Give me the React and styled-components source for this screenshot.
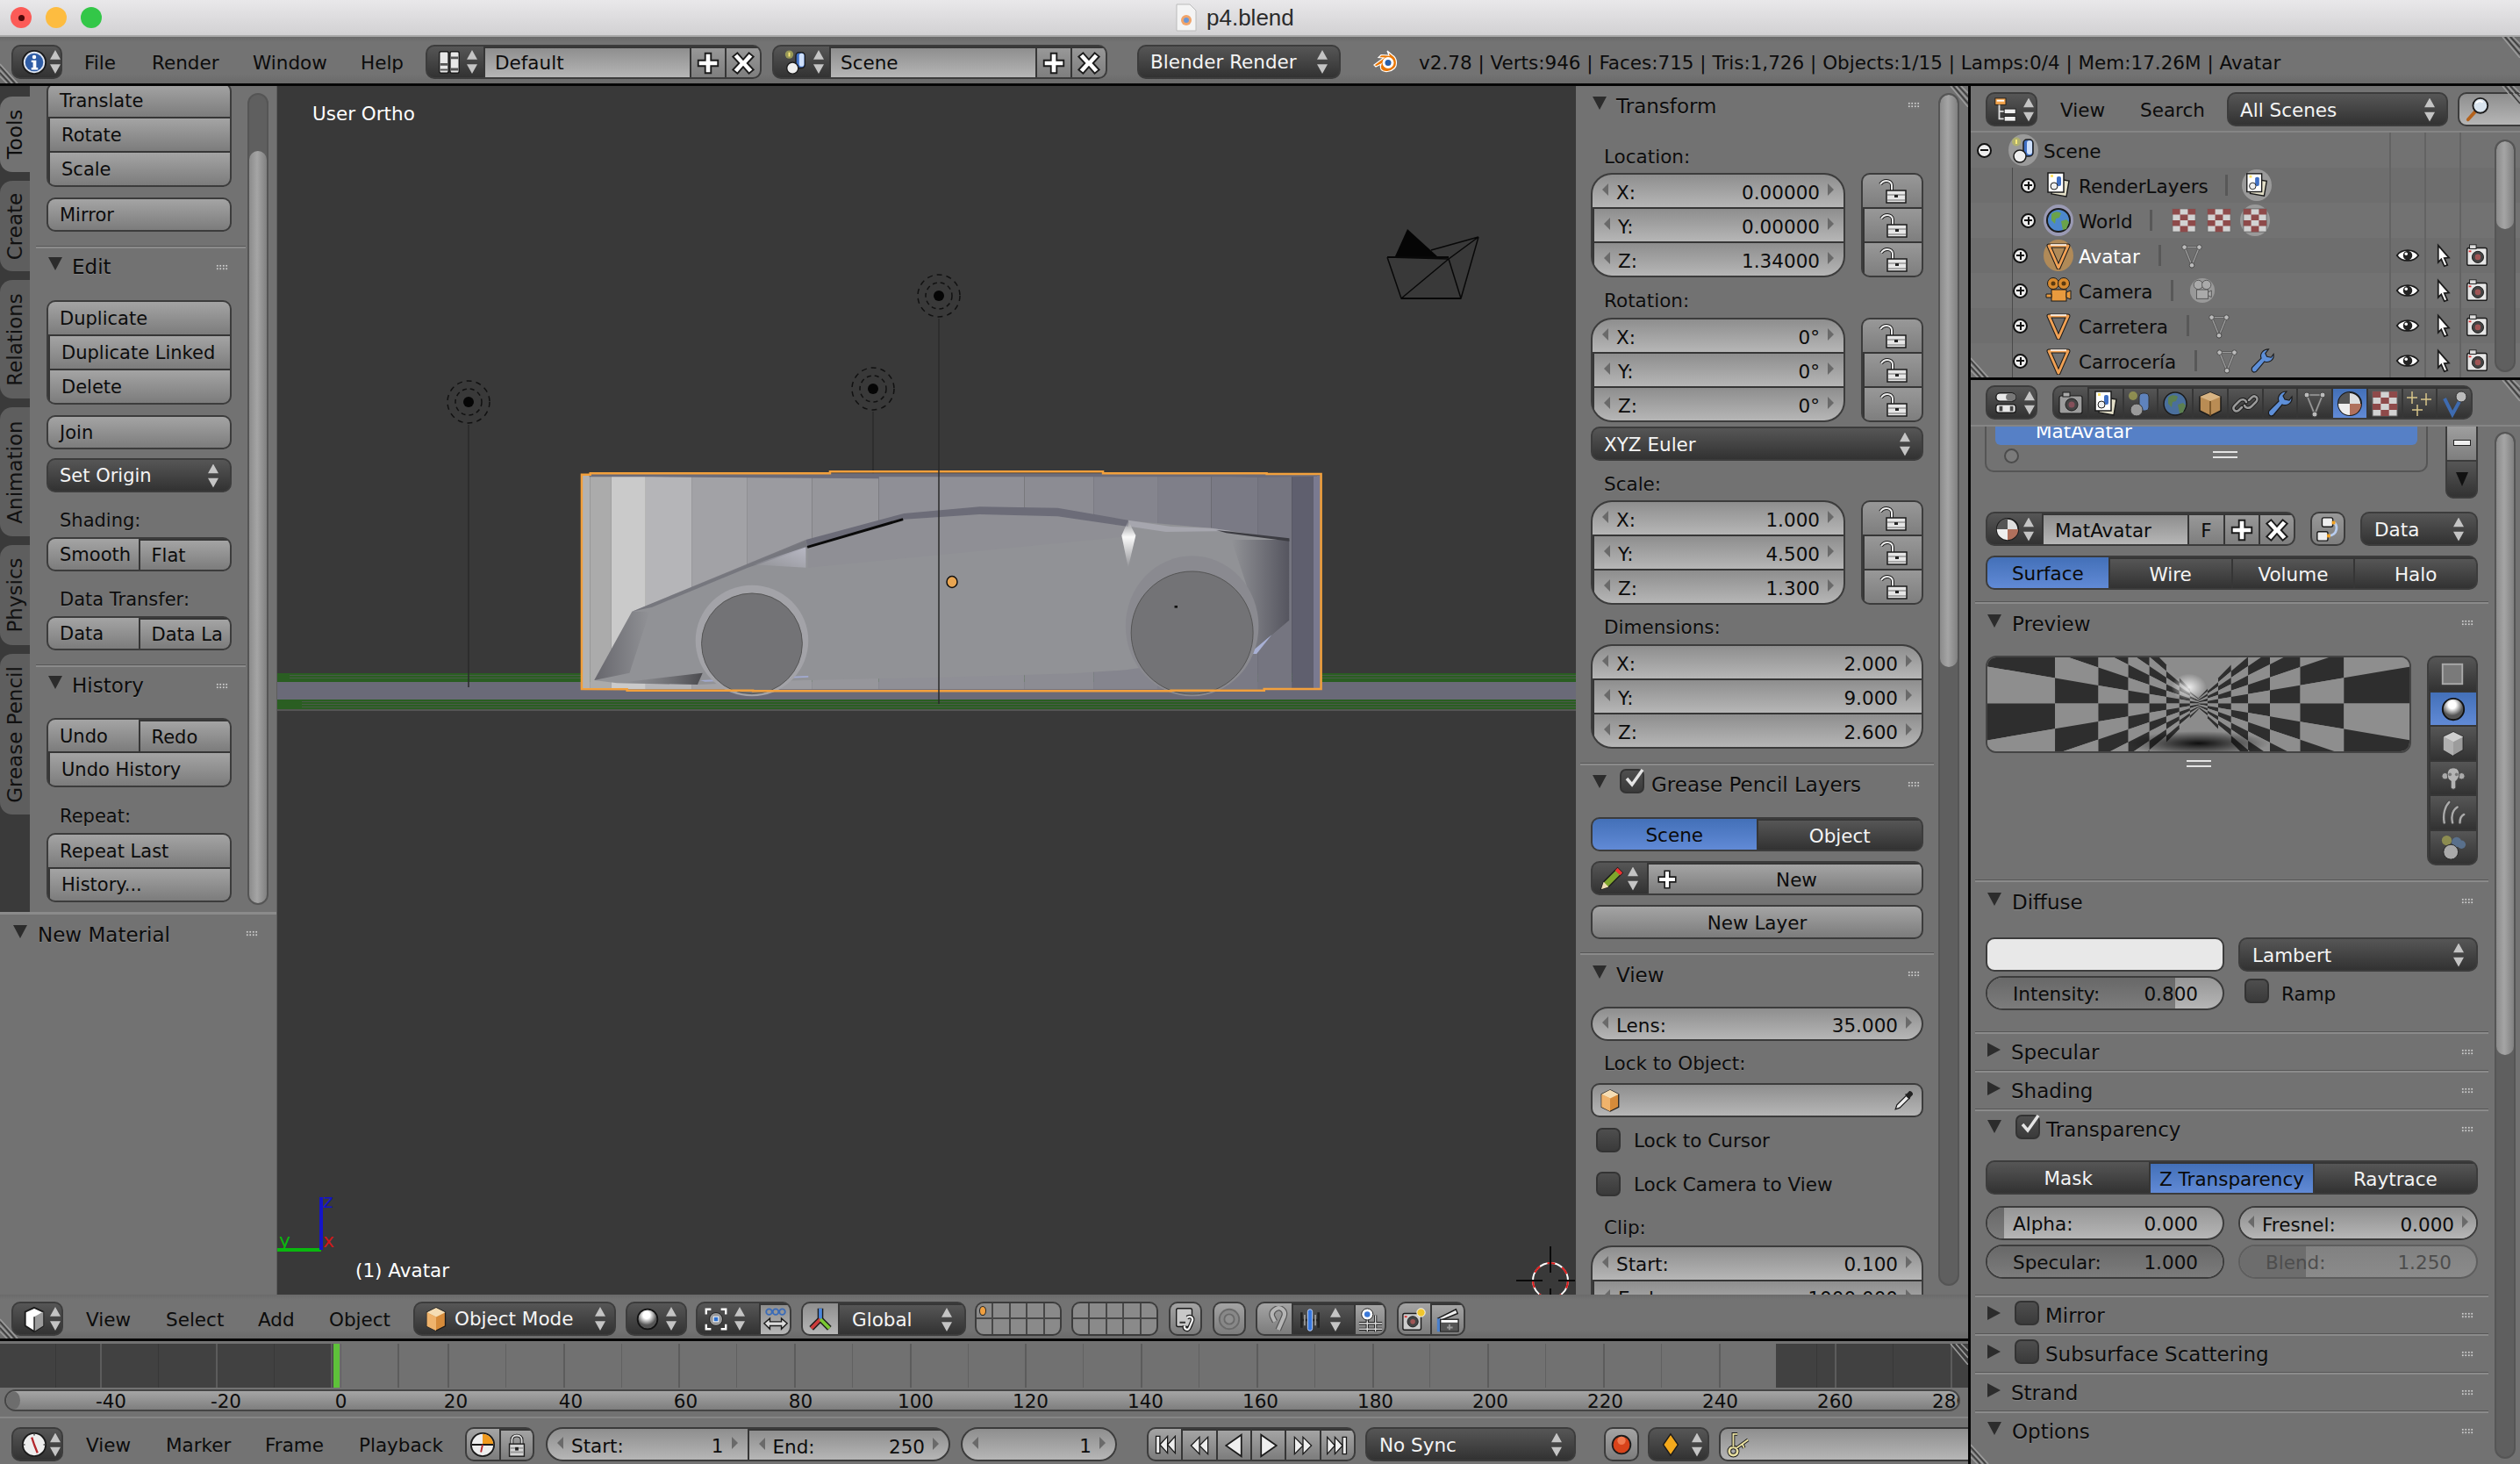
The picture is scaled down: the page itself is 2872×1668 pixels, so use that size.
import React from 'react'
import styled, { createGlobalStyle, css } from 'styled-components'

const Global = createGlobalStyle`
  * { box-sizing: border-box; }
  html, body { margin: 0; padding: 0; background: #727272; }
  body { font-family: "DejaVu Sans", sans-serif; font-size: 21.500px; color: #0c0c0c; }
`

const OUT = '#1b1b1b'

// Icons, all drawn on a 32 unit square
const icons = {
  info: <><circle cx="16" cy="16" r="14" fill="#dfe6f2" stroke={OUT} strokeWidth="2" /><circle cx="16" cy="16" r="11" fill="#2f5da6" /><circle cx="16" cy="9.500" r="2.400" fill="#fff" /><path d="M12.500 13.500h6v9h2v2.500h-8v-2.500h2v-6.500h-2z" fill="#fff" /></>,
  screen: <><rect x="4" y="3" width="11" height="26" rx="2" fill="#e8e8e8" stroke={OUT} strokeWidth="1.500" /><rect x="17" y="3" width="11" height="26" rx="2" fill="#e8e8e8" stroke={OUT} strokeWidth="1.500" /><path d="M5 17h9v3H5zM18 9h9v3h-9zM18 23h9v3h-9zM5 24h9v2H5z" fill="#555" /></>,
  scene: <><circle cx="8" cy="6.500" r="5" fill="#b8b95c" opacity=".7" /><rect x="7" y="4" width="2" height="5" fill="#ffe97a" /><rect x="16" y="4" width="11" height="19" rx="4" fill="#3f6fc4" stroke={OUT} strokeWidth="1.500" /><rect x="20" y="5" width="6" height="16" rx="3" fill="#cfe0fb" /><circle cx="12" cy="23" r="7" fill="#eee" stroke={OUT} strokeWidth="1.500" /></>,
  plus: <path d="M12.500 4h7v8.500H28v7h-8.500V28h-7v-8.500H4v-7h8.500z" fill="#fff" stroke={OUT} strokeWidth="2" />,
  cross: <path d="M9 3.500l7 8 7-8 5.500 4.500L21 16l7.500 8-5.500 4.500-7-8-7 8L3.500 24 11 16 3.500 8z" fill="#fff" stroke={OUT} strokeWidth="2" />,
  logo: <><path d="M3 20l11-8-6-.5 3-3 9 .5-2-5 6 5c5 3 6 11 2 15s-12 5-15 1c-1-2-1-4 0-6l-6 3z" fill="#ea7600" stroke="#fff" strokeWidth="1.200" /><circle cx="19" cy="17.500" r="6.500" fill="#fff" /><circle cx="19" cy="17.500" r="3.500" fill="#2a5fa8" /></>,
  lockOpen: <><path d="M15 16V9c0-3-3-5-6-5S4 5 2 8" fill="none" stroke={OUT} strokeWidth="4" /><path d="M15 16V9c0-3-3-5-6-5S4 5 2 8" fill="none" stroke="#eee" strokeWidth="2" /><rect x="9" y="15" width="22" height="14" fill="#e6e6e6" stroke={OUT} strokeWidth="1.500" /><path d="M10 19h20v2H10zM10 25h20v2H10z" fill="#a9a9a9" /><rect x="18" y="20" width="4" height="3" fill="#222" /></>,
  lock: <><path d="M10 15V9c0-7 12-7 12 0v6" fill="none" stroke={OUT} strokeWidth="4" /><path d="M10 15V9c0-7 12-7 12 0v6" fill="none" stroke="#ddd" strokeWidth="2" /><rect x="7" y="14" width="18" height="15" fill="#d5d5d5" stroke={OUT} strokeWidth="1.500" /><path d="M8 18h16v2H8zM8 23h16v2H8z" fill="#999" /><rect x="14" y="18" width="4" height="4" fill="#222" /></>,
  outliner: <><rect x="3" y="2" width="13" height="8" fill="#f2a24a" stroke={OUT} /><rect x="5" y="4" width="9" height="2" fill="#fff" /><path d="M8 10v17h6M8 18h6" stroke="#ddd" strokeWidth="2" fill="none" /><rect x="14" y="15" width="14" height="6" fill="#eee" stroke={OUT} /><rect x="14" y="24" width="14" height="6" fill="#eee" stroke={OUT} /></>,
  search: <><path d="M13 18L4 28" stroke="#b4621c" strokeWidth="4" strokeLinecap="round" /><circle cx="19" cy="11" r="9" fill="#d9e4ee" stroke={OUT} strokeWidth="2" /><path d="M14 8c2-3 6-3 8-1" stroke="#fff" strokeWidth="2" fill="none" /></>,
  dropper: <><path d="M4 28l2-6L19 9l4 4L10 26z" fill="#eee" stroke={OUT} strokeWidth="1.500" /><path d="M17 7l3-1 3-3c2-2 7 3 5 5l-3 3-1 3z" fill="#222" /></>,
  layers: <><path d="M10 8l18 3-3 18-17-3z" fill="#e3dfc8" stroke={OUT} strokeWidth="1.500" /><rect x="4" y="2" width="18" height="22" fill="#fff" stroke={OUT} strokeWidth="1.500" /><rect x="7" y="4" width="3" height="3" fill="#ffe36a" /><rect x="14" y="6" width="5" height="11" rx="2" fill="#3f6fc4" /><circle cx="11" cy="17" r="4" fill="#eee" stroke={OUT} /></>,
  world: <><circle cx="16" cy="16" r="13" fill="#4c87cc" stroke={OUT} strokeWidth="2" /><path d="M8 9c4-4 8-3 11-1l-2 5-4 1-1 6-4-4zM19 17l6-2 3 3-3 8-4 1z" fill="#6aa24a" /></>,
  texture: <><rect x="2" y="2" width="28" height="28" fill="#d2d2d2" stroke="#666" /><path d="M2 2h9.300v7H2zM20.700 2H30v7h-9.300zM11.300 9h9.400v7h-9.400zM2 16h9.300v7H2zM20.700 16H30v7h-9.300zM11.300 23h9.400v7h-9.400z" fill="#8e4a4a" /></>,
  meshOrange: <><path d="M5 5h22L16 30z" fill="none" stroke={OUT} strokeWidth="5" strokeLinejoin="round" /><path d="M5 5h22L16 30z" fill="none" stroke="#f0a155" strokeWidth="3" strokeLinejoin="round" /><path d="M7 4h18" stroke="#fff" strokeWidth="1.500" /></>,
  meshData: <><path d="M7 6h18L16 28z" fill="none" stroke="#555" strokeWidth="3" /><path d="M7 6h18L16 28z" fill="none" stroke="#9a9a9a" strokeWidth="1.500" /><circle cx="7" cy="6" r="3" fill="#bbb" stroke="#444" /><circle cx="25" cy="6" r="3" fill="#bbb" stroke="#444" /><circle cx="16" cy="28" r="3" fill="#bbb" stroke="#444" /></>,
  cameraObj: <><circle cx="10" cy="8" r="6.500" fill="#d88a2e" stroke={OUT} /><circle cx="22" cy="8" r="6.500" fill="#d88a2e" stroke={OUT} /><circle cx="10" cy="8" r="2.500" fill="#5a3a10" /><circle cx="22" cy="8" r="2.500" fill="#5a3a10" /><rect x="8" y="15" width="17" height="13" fill="#e89a3e" stroke={OUT} /><path d="M25 18l5-2v10l-5-2zM2 20h6v4H2z" fill="#e89a3e" stroke={OUT} /></>,
  cameraData: <><circle cx="16" cy="16" r="15" fill="#999" /><circle cx="11" cy="9" r="5.500" fill="#aaa" stroke="#555" /><circle cx="21" cy="9" r="5.500" fill="#aaa" stroke="#555" /><rect x="9" y="15" width="14" height="11" fill="#aaa" stroke="#555" /><path d="M23 18l4-2v8l-4-2z" fill="#aaa" stroke="#555" /></>,
  wrench: <><path d="M6 30c-3-1-3-4-2-6l11-11c-2-5 2-11 9-11l-4 5 2 4 5 1 3-4c1 7-5 11-11 9L9 29c-1 1-2 1-3 1z" fill="#5e8fd8" stroke={OUT} strokeWidth="1.200" /></>,
  eye: <><path d="M2 16c6-9 22-9 28 0-6 9-22 9-28 0z" fill="#fff" stroke={OUT} strokeWidth="2" /><circle cx="16" cy="16" r="6" fill="#222" /><circle cx="14" cy="14" r="2" fill="#fff" /></>,
  cursor: <path d="M10 3l14 16-6 .5 4 9-4 1.500-4-9-4 4z" fill="#fff" stroke={OUT} strokeWidth="2" />,
  render: <><rect x="4" y="7" width="24" height="21" rx="2" fill="#e6e6e6" stroke={OUT} strokeWidth="1.500" /><rect x="7" y="3" width="8" height="5" fill="#ddd" stroke={OUT} /><circle cx="17" cy="18" r="7" fill="#444" stroke={OUT} /><circle cx="17" cy="18" r="3.500" fill="#a05555" /><rect x="6" y="10" width="3" height="2" fill="#d33" /></>,
  renderDim: <><rect x="3" y="8" width="26" height="20" rx="2" fill="#9c9c9c" stroke={OUT} strokeWidth="1.200" /><rect x="7" y="4" width="8" height="5" fill="#aaa" stroke={OUT} /><circle cx="17" cy="18" r="7" fill="#444" stroke={OUT} /><circle cx="17" cy="18" r="3.500" fill="#84505a" /></>,
  props: <><rect x="3" y="4" width="24" height="10" rx="5" fill="#e8e8e8" stroke={OUT} strokeWidth="1.500" /><rect x="15" y="5" width="12" height="8" rx="4" fill="#777" /><rect x="3" y="18" width="24" height="10" rx="3" fill="#e8e8e8" stroke={OUT} strokeWidth="1.500" /><rect x="7" y="20" width="4" height="6" fill="#444" /><rect x="20" y="20" width="4" height="6" fill="#444" /></>,
  sceneDim: <><circle cx="8" cy="7" r="5" fill="#a8a852" opacity=".7" /><rect x="15" y="4" width="11" height="20" rx="4" fill="#5f83bd" stroke="#333" /><circle cx="12" cy="23" r="7" fill="#9a9a9a" stroke="#333" /></>,
  worldDim: <><circle cx="16" cy="16" r="13" fill="#4a6f9c" stroke={OUT} strokeWidth="1.500" /><path d="M8 9c4-4 8-3 11-1l-2 5-4 1-1 6-4-4zM19 17l6-2 3 3-3 8-4 1z" fill="#5c7f50" /></>,
  cube: <><path d="M16 3l12 5v16l-12 6-12-6V8z" fill="#b98c54" stroke={OUT} strokeWidth="1.500" /><path d="M16 3l12 5-12 5-12-5z" fill="#d8b483" /><path d="M16 13v17" stroke="#6c4a1f" strokeWidth="1.500" /></>,
  link: <><g fill="none" strokeLinecap="round"><path d="M12 20l-3 3c-4 4-9-1-5-5l5-5c3-3 7-2 8 1M20 12l3-3c4-4 9 1 5 5l-5 5c-3 3-7 2-8-1" stroke={OUT} strokeWidth="4.500" /><path d="M12 20l-3 3c-4 4-9-1-5-5l5-5c3-3 7-2 8 1M20 12l3-3c4-4 9 1 5 5l-5 5c-3 3-7 2-8-1" stroke="#9a9a9a" strokeWidth="2.500" /></g></>,
  material: <><circle cx="16" cy="16" r="13" fill="#ddd" stroke={OUT} strokeWidth="2" /><path d="M16 16h13a13 13 0 0 1-13 13z" fill="#b0705c" /><path d="M3 16h13v13A13 13 0 0 1 3 16z" fill="#eee" /><path d="M16 3a13 13 0 0 0-13 13h13z" fill="#555" /></>,
  stars: <g stroke="#d9c68a" strokeWidth="1.500"><path d="M8 2v14M2 9h12M24 4v14M18 11h12M14 17v13M8 23h12" /></g>,
  physics: <><path d="M5 10l9 18 12-22" fill="none" stroke="#3e6bb0" strokeWidth="4" /><circle cx="24" cy="8" r="6" fill="#bbb" stroke="#333" /></>,
  view3d: <><path d="M16 2l11 5v17l-11 7-11-7V7z" fill="#fff" stroke={OUT} strokeWidth="2" /><path d="M16 13l11-6v17l-11 7z" fill="#9a9a9a" /><path d="M16 13v18" stroke={OUT} strokeWidth="1.500" /></>,
  clock: <><circle cx="16" cy="16" r="14" fill="#eee" stroke={OUT} strokeWidth="2" /><path d="M16 16l-3-9M16 16l4 10" stroke="#b3282d" strokeWidth="2.500" /><circle cx="16" cy="4" r="1" fill="#666" /><circle cx="28" cy="16" r="1" fill="#666" /><circle cx="4" cy="16" r="1" fill="#666" /></>,
  clockRange: <><circle cx="16" cy="16" r="14" fill="#eee" stroke={OUT} strokeWidth="2" /><path d="M16 16V3a13 13 0 0 1 13 13z" fill="#f09a1e" /><path d="M3 16h26" stroke={OUT} strokeWidth="2" /><path d="M16 16l-2 9" stroke="#b3282d" strokeWidth="2" /></>,
  cubeOrange: <><path d="M16 1l12 6v18l-12 6-12-6V7z" fill="#d68b3a" stroke={OUT} strokeWidth="1.500" /><path d="M16 1l12 6-12 6-12-6z" fill="#f5ddb4" /><path d="M4 7l12 6v18L4 25z" fill="#efb36c" /></>,
  pivot: <><path d="M4 10V4h6M22 4h6v6M28 22v6h-6M10 28H4v-6" fill="none" stroke="#fff" strokeWidth="2.500" /><circle cx="16" cy="16" r="8" fill="#999" stroke={OUT} /><rect x="13" y="13" width="6" height="6" fill="#2a6fd0" stroke="#fff" /></>,
  orient: <><circle cx="8" cy="6" r="3.500" fill="none" stroke="#3a6bb8" strokeWidth="2" /><circle cx="16" cy="6" r="3.500" fill="none" stroke="#3a6bb8" strokeWidth="2" /><circle cx="24" cy="6" r="3.500" fill="none" stroke="#3a6bb8" strokeWidth="2" /><path d="M2 20l7-6v4h14v-4l7 6-7 7v-4H9v4z" fill="#ddd" stroke={OUT} strokeWidth="1.500" /></>,
  manip: <><path d="M16 16V3" stroke={OUT} strokeWidth="7" /><path d="M16 16L5 27" stroke={OUT} strokeWidth="7" /><path d="M16 16l11 11" stroke={OUT} strokeWidth="7" /><path d="M16 16V3" stroke="#4a86dd" strokeWidth="4" /><path d="M16 16L5 27" stroke="#cc3b3b" strokeWidth="4" /><path d="M16 16l11 11" stroke="#7ac832" strokeWidth="4" /></>,
  linkCam: <><rect x="5" y="3" width="19" height="22" rx="2" fill="#c8c8c8" stroke={OUT} strokeWidth="1.500" /><path d="M9 20h7" stroke="#333" strokeWidth="2" /><path d="M18 14c5-3 8 1 6 5l-3 7c-2 5-7 2-6-2" fill="none" stroke={OUT} strokeWidth="5" /><path d="M18 14c5-3 8 1 6 5l-3 7c-2 5-7 2-6-2" fill="none" stroke="#eee" strokeWidth="2.500" /></>,
  ring: <><circle cx="16" cy="16" r="12" fill="#888" stroke="#6a6a6a" strokeWidth="2" /><circle cx="16" cy="16" r="6" fill="#8f8f8f" stroke="#6a6a6a" strokeWidth="2" /></>,
  magnet: <><path d="M20 29L27 13c3-8-5-12-9-10s-7 5-5 10l3 6" fill="none" stroke="#555" strokeWidth="7" /><path d="M20 29L27 13c3-8-5-12-9-10s-7 5-5 10l3 6" fill="none" stroke="#b5b5b5" strokeWidth="4.500" /></>,
  snapEl: <><path d="M5 6v20M27 6v20M5 16h22" stroke="#222" strokeWidth="3" /><path d="M9 9v14M23 9v14" stroke="#999" strokeWidth="2" /><rect x="13" y="2" width="6" height="28" rx="3" fill="#3778e0" stroke="#cfe0ff" /></>,
  snapTg: <><path d="M12 2v28M22 10v20M2 20h28M2 27h28" stroke={OUT} strokeWidth="3.500" /><path d="M12 2v28M22 10v20M2 20h28M2 27h28" stroke="#ddd" strokeWidth="1.500" /><circle cx="12" cy="9" r="7" fill="#fff" stroke={OUT} /><circle cx="12" cy="9" r="3.500" fill="#3a78d8" /></>,
  renderStill: <><rect x="2" y="9" width="22" height="20" rx="2" fill="#ccc" stroke={OUT} strokeWidth="1.500" /><circle cx="14" cy="19" r="6.500" fill="#444" stroke={OUT} /><circle cx="14" cy="19" r="3" fill="#a05555" /><rect x="4" y="12" width="3" height="2" fill="#d33" /><circle cx="24" cy="8" r="5" fill="#f0c62e" stroke="#fff" /></>,
  clapper: <><path d="M4 14L26 3l2 5-22 9z" fill="#eee" stroke={OUT} strokeWidth="1.500" /><path d="M3 14h4v16H3z" fill="#4a80cc" /><rect x="7" y="15" width="22" height="15" fill="#555" stroke={OUT} /><path d="M8 16h20v3H8z" fill="#fff" /><path d="M18 21v7M15 25h7" stroke="#999" strokeWidth="2" /></>,
  first: <path d="M4 5h5v22H4zM9 16L19 5v22zM19 16L29 5v22z" fill="#eee" stroke={OUT} strokeWidth="1.500" />,
  prev: <path d="M5 16L16 5v22zM16 16L27 5v22z" fill="#eee" stroke={OUT} strokeWidth="1.500" />,
  rev: <path d="M26 2v28L6 16z" fill="#eee" stroke={OUT} strokeWidth="2" />,
  play: <path d="M6 2v28l20-14z" fill="#eee" stroke={OUT} strokeWidth="2" />,
  next: <path d="M5 5l11 11L5 27zM16 5l11 11-11 11z" fill="#eee" stroke={OUT} strokeWidth="1.500" />,
  last: <path d="M28 5h-5v22h5zM23 16L13 5v22zM13 16L3 5v22z" fill="#eee" stroke={OUT} strokeWidth="1.500" />,
  record: <><circle cx="16" cy="16" r="11" fill="#d8431a" stroke={OUT} strokeWidth="2" /><circle cx="16" cy="11" r="5" fill="#f07a50" /></>,
  key: <path d="M16 3l9 13-9 13-9-13z" fill="#f4a91c" stroke={OUT} strokeWidth="1.500" />,
  keyset: <><circle cx="9" cy="24" r="5" fill="none" stroke={OUT} strokeWidth="5" /><circle cx="9" cy="24" r="5" fill="none" stroke="#e8dfa0" strokeWidth="3" /><path d="M9 19V3h5M13 20l14-10M20 15l2 5" fill="none" stroke={OUT} strokeWidth="4" /><path d="M9 19V3h5M13 20l14-10M20 15l2 5" fill="none" stroke="#e8dfa0" strokeWidth="2" /></>,
  pencil: <><path d="M3 29l3-9L23 3l6 6-17 17z" fill="#7fa52c" stroke={OUT} strokeWidth="1.500" /><path d="M23 3l6 6-3 3-6-6z" fill="#e33" /><path d="M3 29l3-9 6 6z" fill="#eedcb4" /></>,
  nodes: <><rect x="9" y="2" width="13" height="11" rx="2" fill="#eee" stroke={OUT} strokeWidth="1.500" /><rect x="3" y="19" width="13" height="11" rx="2" fill="#eee" stroke={OUT} strokeWidth="1.500" /><path d="M22 8c7 0 7 16-6 16" fill="none" stroke="#b8cdf0" strokeWidth="3" /><rect x="21" y="6" width="4" height="4" fill="#f0a020" /><rect x="15" y="22" width="4" height="4" fill="#f0a020" /></>,
  plane: <rect x="4" y="4" width="24" height="24" fill="#7a7a7a" stroke="#aaa" strokeWidth="2" />,
  sphereBig: <><defs><radialGradient id="sph2" cx=".45" cy=".3"><stop offset=".35" stopColor="#fff" /><stop offset="1" stopColor="#555" /></radialGradient></defs><circle cx="16" cy="16" r="13" fill="url(#sph2)" stroke="#111" strokeWidth="2" /></>,
  cubeGray: <><path d="M16 2l12 6v16l-12 7-12-7V8z" fill="#9c9c9c" stroke="#333" strokeWidth="1.500" /><path d="M16 2l12 6-12 6-12-6z" fill="#cfcfcf" /><path d="M16 14v17L4 24V8z" fill="#b0b0b0" /></>,
  monkey: <><circle cx="6" cy="13" r="4" fill="#aaa" stroke="#444" /><circle cx="26" cy="13" r="4" fill="#aaa" stroke="#444" /><path d="M16 3c6 0 8 5 7 10-1 4-3 5-4 6v7c0 4-6 4-6 0v-7c-2-1-4-3-4-6-1-5 1-10 7-10z" fill="#b4b4b4" stroke="#444" /><circle cx="12" cy="11" r="2" fill="#777" /><circle cx="20" cy="11" r="2" fill="#777" /></>,
  hair: <g fill="none" strokeLinecap="round"><path d="M5 28C3 18 6 8 11 3M15 28c-2-9 0-15 6-19M24 28c0-5 1-8 5-10" stroke="#444" strokeWidth="4.500" /><path d="M5 28C3 18 6 8 11 3M15 28c-2-9 0-15 6-19M24 28c0-5 1-8 5-10" stroke="#aaa" strokeWidth="2.500" /></g>,
  sky: <><circle cx="8" cy="7" r="6" fill="#a8a852" opacity=".7" /><circle cx="20" cy="9" r="6" fill="#59708c" /><circle cx="26" cy="12" r="5" fill="#59708c" /><circle cx="13" cy="21" r="9" fill="#aaa" stroke="#222" /></>,
}

const Svg = styled.svg`
  flex: none;
  display: block;
`

const Icon = ({ name, size = 30 }) => (
  <Svg width={size} height={size} viewBox="0 0 32 32">
    {icons[name]}
  </Svg>
)

const Spin = styled.span`
  flex: none;
  display: block;
  width: 12px;
  height: 27px;
  background: ${({ $dim }) => ($dim ? '#777' : '#c4c4c4')};
  clip-path: polygon(50% 0, 100% 40%, 0 40%, 0 60%, 100% 60%, 50% 100%, 0 60%, 0 40%);
`

const margin = css`
  margin-left: ${({ $ml }) => $ml || 0}px;
  margin-top: ${({ $mt }) => $mt || 0}px;
`

const cellKinds = {
  btn: css`background: linear-gradient(#a4a4a4, #7c7c7c); color: #0c0c0c;`,
  dark: css`background: linear-gradient(#565656, #323232); color: #f4f4f4;`,
  num: css`background: linear-gradient(#8e8e8e, #b6b6b6); color: #0c0c0c;`,
  blue: css`background: linear-gradient(#4370b8, #618ad6); color: #0a0a0a;`,
  hdr: css`background: linear-gradient(#989898, #7e7e7e); color: #0c0c0c;`,
}

const Group = styled.div`
  ${margin}
  flex: ${({ $w }) => ($w ? 'none' : '1 1 0')};
  width: ${({ $w }) => ($w ? `${$w}px` : 'auto')};
  height: ${({ $rows }) => ($rows || 1) * 40 - 1}px;
  display: flex;
  flex-direction: ${({ $col }) => ($col ? 'column' : 'row')};
  border: 2px solid #3c3c3c;
  border-radius: ${({ $r }) => $r || 10}px;
  overflow: hidden;
  background: #3c3c3c;
`

const Cell = styled.div`
  ${({ $kind }) => cellKinds[$kind || 'btn']}
  flex: ${({ $w }) => ($w ? 'none' : '1 1 0')};
  width: ${({ $w }) => ($w ? `${$w}px` : 'auto')};
  min-width: 0;
  min-height: 0;
  display: flex;
  align-items: center;
  justify-content: ${({ $center }) => ($center ? 'center' : 'flex-start')};
  gap: ${({ $gap }) => $gap || 0}px;
  padding: 1px ${({ $pad }) => $pad ?? 0}px 0;
  white-space: nowrap;
  overflow: hidden;
  & + & {
    ${({ $sep }) => ($sep === 'col' ? 'border-top' : 'border-left')}: 2px solid #363636;
  }
`

const SplitRow = styled(Cell)`
  align-items: stretch;
  padding: 0;
  background: none;
`

const Grow = styled.span`
  flex: 1;
`

const Tri = styled.span`
  flex: none;
  width: 0;
  height: 0;
  border-style: solid;
  border-color: transparent;
  border-width: 7px ${({ $dir }) => ($dir === 'r' ? '0' : '7px')} 7px ${({ $dir }) => ($dir === 'r' ? '7px' : '0')};
  ${({ $dir }) => ($dir === 'r' ? 'border-left-color: #6a6a6a;' : 'border-right-color: #6a6a6a;')}
  margin-top: -4px;
`

const NumText = styled.span`
  flex: 1;
  display: flex;
  justify-content: space-between;
  padding: 0 9px;
  margin-top: 2px;
`

const Num = ({ label, value, sep }) => (
  <Cell $kind="num" $pad={11} $sep={sep}>
    <Tri $dir="l" />
    <NumText>
      <span>{label}</span>
      <span>{value}</span>
    </NumText>
    <Tri $dir="r" />
  </Cell>
)

const Vec = ({ rows, ml, mt, w, r = 24 }) => (
  <Group $col $rows={rows.length} $r={r} $ml={ml} $mt={mt} $w={w}>
    {rows.map(([l, v]) => <Num key={l} label={l} value={v} sep="col" />)}
  </Group>
)

const Sl = styled.div`
  ${margin}
  position: relative;
  flex: ${({ $w }) => ($w ? 'none' : '1 1 0')};
  width: ${({ $w }) => ($w ? `${$w}px` : 'auto')};
  height: 39px;
  display: flex;
  border: 2px solid ${({ $off }) => ($off ? '#5e5e5e' : '#3c3c3c')};
  border-radius: 20px;
  overflow: hidden;
  background: ${({ $off }) => ($off ? 'linear-gradient(#818181, #8b8b8b)' : 'linear-gradient(#969696, #b6b6b6)')};
  color: ${({ $off }) => ($off ? '#4d4d4d' : '#0c0c0c')};
`

const SlFill = styled.div`
  position: absolute;
  left: 0;
  top: 0;
  bottom: 0;
  background: linear-gradient(#686868, #7c7c7c);
  ${({ $off }) => ($off && 'background: #6d6d6d;')}
`

const SlText = styled.div`
  position: absolute;
  inset: 0;
  display: flex;
  justify-content: space-between;
  align-items: center;
  padding: 2px 28px 0 29px;
`

const Slider = ({ label, value, frac, off, w, ml }) => (
  <Sl $off={off} $w={w} $ml={ml}>
    <SlFill $off={off} style={{ width: `${frac * 100}%` }} />
    <SlText><span>{label}</span><span>{value}</span></SlText>
  </Sl>
)

const Hline = styled.div`
  ${margin}
  height: 3px;
  flex: none;
  border-top: 1px solid #575757;
  border-bottom: 2px solid #8b8b8b;
  margin-right: ${({ $mr }) => $mr || 0}px;
`

const Grip = styled.span`
  flex: none;
  position: absolute;
  right: ${({ $right }) => $right}px;
  top: 50%;
  margin-top: -4px;
  width: 14px;
  height: 8px;
  background-image: radial-gradient(#cfcfcf 45%, transparent 50%);
  background-size: 3.500px 3.500px;
`

const PanelTri = styled.span`
  flex: none;
  width: 0;
  height: 0;
  border-style: solid;
  border-color: transparent;
  ${({ $open }) => ($open
    ? 'border-width: 15px 8px 0 8px; border-top-color: #2c2c2c; margin-top: -6px;'
    : 'border-width: 8px 0 8px 15px; border-left-color: #2c2c2c; margin-top: -6px;')}
`

const HeadWrap = styled.div`
  position: relative;
  flex: none;
  height: ${({ $h }) => $h || 44}px;
  display: flex;
  align-items: center;
  padding-left: ${({ $pad }) => $pad}px;
  padding-bottom: ${({ $lift }) => $lift || 0}px;
  font-size: 23px;
  text-shadow: 0 1px 1px rgba(255, 255, 255, .16);
`

const HeadLabel = styled.span`
  margin-left: ${({ $ml }) => $ml}px;
  margin-top: 1px;
`

const Check = styled.span`
  flex: none;
  display: block;
  position: relative;
  width: 28px;
  height: 28px;
  margin-left: ${({ $ml }) => $ml || 0}px;
  margin-top: ${({ $mt }) => $mt || 0}px;
  border: 2px solid #333;
  border-radius: 7px;
  background: linear-gradient(#4e4e4e, #3a3a3a);
`

const CheckMark = styled.svg`
  position: absolute;
  left: 2px;
  top: -5px;
`

const CheckBox = ({ on, ml, mt }) => (
  <Check $ml={ml} $mt={mt}>
    {on && (
      <CheckMark width="26" height="26" viewBox="0 0 26 26">
        <path d="M4 14l6 7L22 4" fill="none" stroke="#e4e4e4" strokeWidth="3.500" />
      </CheckMark>
    )}
  </Check>
)

const PanelHead = ({ title, open, pad = 2, check, checkOn, checkGap, textGap = 11, grip = 4, h, lift }) => (
  <HeadWrap $pad={pad} $h={h} $lift={lift}>
    <PanelTri $open={open} />
    {check && <CheckBox on={checkOn} ml={checkGap} mt={-6} />}
    <HeadLabel $ml={textGap}>{title}</HeadLabel>
    <Grip $right={grip} />
  </HeadWrap>
)

const Label = styled.div`
  ${margin}
  flex: none;
  height: 24px;
  line-height: 24px;
  padding-left: ${({ $pad }) => $pad ?? 15}px;
  text-shadow: 0 1px 1px rgba(255, 255, 255, .12);
`

const HRow = styled.div`
  ${margin}
  flex: none;
  display: flex;
  width: ${({ $w }) => ($w ? `${$w}px` : 'auto')};
  align-items: flex-start;
`

const CheckRow = styled.div`
  ${margin}
  flex: none;
  height: 28px;
  display: flex;
  align-items: center;
  gap: 15px;
  padding-left: 6px;
`

const CheckText = styled.span`
  margin-top: 1px;
`

// Page frame
const Page = styled.div`
  width: 2872px;
  height: 1668px;
  overflow: hidden;
  display: flex;
  flex-direction: column;
  background: #727272;
`

const TitleBar = styled.div`
  flex: none;
  height: 42px;
  display: flex;
  align-items: center;
  background: linear-gradient(#e9e8ea, #d2d1d3);
  border-bottom: 2px solid #a9a9a9;
  position: relative;
`

const Light = styled.span`
  flex: none;
  width: 24px;
  height: 24px;
  border-radius: 50%;
  margin-left: ${({ $ml }) => $ml}px;
  background: ${({ $c }) => $c};
  display: flex;
  align-items: center;
  justify-content: center;
`

const LightDot = styled.span`
  width: 7px;
  height: 7px;
  border-radius: 50%;
  background: #4d0a0a;
`

const Title = styled.div`
  margin-left: 1224px;
  display: flex;
  align-items: center;
  gap: 11px;
  font-family: "Liberation Sans", sans-serif;
  font-size: 26px;
  color: #2b2b2b;
`

const Bar = styled.div`
  flex: none;
  position: relative;
  height: ${({ $h }) => $h}px;
  display: flex;
  align-items: center;
  padding-left: ${({ $pad }) => $pad ?? 13}px;
  padding-top: ${({ $pt }) => $pt || 0}px;
  background: ${({ $bg }) => $bg || 'linear-gradient(#6a6a6a, #737373 12%, #737373 80%, #6a6a6a)'};
  white-space: nowrap;
  overflow: hidden;
`

const Black = styled.div`
  flex: none;
  height: 3px;
  background: #060606;
`

const Menu = styled.span`
  flex: none;
  width: ${({ $w }) => $w}px;
  margin-top: 2px;
  padding-left: ${({ $pl }) => $pl || 0}px;
  color: #0c0c0c;
`

const Stats = styled.span`
  margin-left: 21px;
  margin-top: 2px;
`

const Body = styled.div`
  flex: 1;
  min-height: 0;
  display: flex;
`

const LeftCol = styled.div`
  width: 2243px;
  flex: none;
  display: flex;
  flex-direction: column;
  position: relative;
`

const RightCol = styled.div`
  flex: 1;
  min-width: 0;
  border-left: 3px solid #060606;
  display: flex;
  flex-direction: column;
  position: relative;
`

const ViewRow = styled.div`
  height: 1377px;
  flex: none;
  display: flex;
`

const ToolColumn = styled.div`
  width: 316px;
  flex: none;
  display: flex;
  flex-direction: column;
  border-right: 1px solid #5d5d5d;
`

const ToolTop = styled.div`
  height: 944px;
  flex: none;
  display: flex;
  border-bottom: 3px solid #8b8b8b;
`

const Tabs = styled.div`
  width: 34px;
  flex: none;
  background: #3a3a3a;
  display: flex;
  flex-direction: column;
  align-items: flex-end;
  padding-top: 12px;
  gap: 10px;
`

const Tab = styled.div`
  width: 34px;
  flex: none;
  height: ${({ $h }) => $h}px;
  border-radius: 14px 0 0 14px;
  background: ${({ $on }) => ($on ? '#727272' : '#5e5e5e')};
  color: ${({ $on }) => ($on ? '#0c0c0c' : '#111')};
  display: flex;
  align-items: center;
  justify-content: center;
`

const TabText = styled.span`
  transform: rotate(-90deg);
  white-space: nowrap;
  font-size: 23px;
`

const stackChildren = css`
  && > * {
    flex: none;
  }
`

const Shelf = styled.div`
  position: relative;
  flex: 1;
  min-width: 0;
  overflow: hidden;
  display: flex;
  flex-direction: column;
  padding-left: 19px;
  padding-right: 51px;
  font-size: 21px;
  ${stackChildren}
`

const Scroll = styled.div`
  position: absolute;
  right: ${({ $right }) => $right}px;
  top: ${({ $top }) => $top}px;
  bottom: ${({ $bottom }) => $bottom}px;
  width: 24px;
  border: 2px solid #555;
  border-radius: 12px;
  background: #5f5f5f;
  overflow: hidden;
`

const ScrollThumb = styled.div`
  height: ${({ $h }) => $h}px;
  margin-top: ${({ $at }) => $at || 0}px;
  border-radius: 12px;
  background: linear-gradient(to right, #8b8b8b, #a5a5a5 45%, #808080);
`

const NewMaterial = styled.div`
  flex: 1;
  background: #727272;
`

const Viewport = styled.div`
  position: relative;
  flex: 1;
  min-width: 0;
  background: #393939;
  overflow: hidden;
  color: #f5f5f5;
`

const Canvas = styled.svg`
  position: absolute;
  left: 0;
  top: 0;
`

const ViewLabel = styled.div`
  position: absolute;
  left: ${({ $x }) => $x}px;
  top: ${({ $y }) => $y}px;
  color: #fff;
`

const NPanel = styled.div`
  position: relative;
  width: 447px;
  flex: none;
  overflow: hidden;
  display: flex;
  flex-direction: column;
  padding-left: 17px;
  padding-right: 51px;
  background: #727272;
  ${stackChildren}
`

const Rule = styled(Hline)`
  margin-left: ${({ $l }) => $l}px;
  margin-right: ${({ $r }) => $r}px;
`

const Timeline = styled.div`
  height: 50px;
  flex: none;
  position: relative;
  margin-top: 3px;
  display: flex;
  background-color: #737373;
`

const TimeBand = styled.div`
  flex: none;
  width: ${({ $w }) => $w}px;
  background-color: ${({ $dark }) => ($dark ? '#414141' : '#717171')};
  background-image:
    repeating-linear-gradient(to right, #5c5c5c 0 2px, transparent 2px 131.700px),
    repeating-linear-gradient(to right, rgba(0, 0, 0, .14) 0 1px, transparent 1px 65.850px);
  background-position: ${({ $pos }) => $pos}px 0;
`

const Cfra = styled.div`
  flex: none;
  width: 7px;
  background: #5ec23a;
`

const Scrub = styled.div`
  height: 25px;
  margin: 2px 9px 0 5px;
  padding-left: 54px;
  flex: none;
  position: relative;
  border: 2px solid #454545;
  border-radius: 13px;
  background: linear-gradient(#a5a5a5, #7e7e7e);
  display: flex;
  overflow: hidden;
`

const ScrubThumb = styled.div`
  position: absolute;
  left: 0;
  top: 0;
  bottom: 0;
  width: 16px;
  border-radius: 50%;
  background: #6d6d6d;
`

const ScrubNum = styled.span`
  flex: none;
  width: 131px;
  text-align: center;
  line-height: 24px;
`

const ThinRule = styled.div`
  flex: none;
  height: 8px;
  border-bottom: 2px solid #868686;
`

const Outliner = styled.div`
  height: 332px;
  flex: none;
  position: relative;
  display: flex;
  flex-direction: column;
  overflow: hidden;
  background: #727272;
`

const OutRows = styled.div`
  position: relative;
  flex: 1;
  min-height: 0;
  overflow: hidden;
  border-top: 2px solid #858585;
`

const TreeLine = styled.div`
  position: absolute;
  left: 47px;
  top: 40px;
  bottom: 0;
  width: 1px;
  background: #4a4a4a;
`

const OutRow = styled.div`
  height: 40px;
  display: flex;
  background: ${({ $alt }) => ($alt ? '#6e6e6e' : '#727272')};
`

const Tree = styled.div`
  width: 477px;
  flex: none;
  display: flex;
  align-items: center;
  padding-left: ${({ $pad }) => $pad}px;
  white-space: nowrap;
`

const Expander = styled.span`
  flex: none;
  width: 17px;
  height: 17px;
  margin-right: ${({ $gap }) => $gap}px;
  border-radius: 50%;
  border: 2px solid #111;
  background: #eee;
  position: relative;
  &::before {
    content: '';
    position: absolute;
    left: 2px;
    right: 2px;
    top: 5.500px;
    height: 2px;
    background: #111;
  }
  ${({ $plus }) => $plus && css`
    &::after {
      content: '';
      position: absolute;
      top: 2px;
      bottom: 2px;
      left: 5.500px;
      width: 2px;
      background: #111;
    }
  `}
`

const Halo = styled.span`
  flex: none;
  width: 34px;
  height: 36px;
  margin-left: ${({ $ml }) => $ml || 0}px;
  border-radius: 50%;
  background: ${({ $c }) => $c || 'transparent'};
  display: flex;
  align-items: center;
  justify-content: center;
`

const TreeName = styled.span`
  flex: none;
  width: ${({ $w }) => $w}px;
  margin-left: 6px;
  margin-top: 2px;
  color: ${({ $active }) => ($active ? '#fff' : '#0c0c0c')};
`

const RowBar = styled.span`
  flex: none;
  width: 3px;
  height: 24px;
  background: #585858;
`

const RestrictCell = styled.div`
  flex: ${({ $last }) => ($last ? '1' : 'none')};
  width: 40px;
  border-left: 2px solid #636363;
  display: flex;
  align-items: center;
  justify-content: ${({ $last }) => ($last ? 'flex-start' : 'center')};
  padding-left: ${({ $last }) => ($last ? 3 : 0)}px;
`

const Props = styled.div`
  flex: 1;
  position: relative;
  min-height: 0;
  display: flex;
  flex-direction: column;
  overflow: hidden;
  background: #727272;
`

const PropsBody = styled.div`
  flex: 1;
  min-height: 0;
  overflow: hidden;
  display: flex;
  flex-direction: column;
  padding-left: 17px;
  padding-right: 48px;
  border-top: 2px solid #858585;
  ${stackChildren}
`

const ListBox = styled.div`
  position: relative;
  width: 505px;
  height: 52px;
  margin-left: -1px;
  flex: none;
  border: 2px solid #555;
  border-top: none;
  border-radius: 0 0 10px 10px;
  padding: 0 10px;
`

const ListRowSel = styled.div`
  height: 21px;
  background: #5680c6;
  border-radius: 0 0 6px 6px;
  color: #fff;
  padding-left: 46px;
  line-height: 12px;
  overflow: hidden;
`

const ListPlus = styled.span`
  position: absolute;
  left: 20px;
  bottom: 8px;
  width: 17px;
  height: 17px;
  border-radius: 50%;
  border: 2px solid #4c4c4c;
  background: #7b7b7b;
`

const ListGrip = styled.span`
  position: absolute;
  left: 258px;
  bottom: 14px;
  width: 28px;
  height: 8px;
  border-top: 2px solid #e4e4e4;
  border-bottom: 2px solid #e4e4e4;
`

const ListSide = styled.div`
  margin-left: 20px;
  flex: none;
  width: 37px;
  height: 86px;
  display: flex;
  flex-direction: column;
  margin-top: -4px;
`

const SideBtn = styled.div`
  flex: 1;
  background: ${({ $dark }) => ($dark ? 'linear-gradient(#565656, #323232)' : 'linear-gradient(#a0a0a0, #7e7e7e)')};
  border: 2px solid #3c3c3c;
  ${({ $dark }) => ($dark ? 'border-radius: 0 0 9px 9px; margin-top: -2px;' : '')}
  display: flex;
  align-items: center;
  justify-content: center;
`

const Minus = styled.span`
  width: 20px;
  height: 7px;
  background: #eee;
  border: 1px solid #222;
`

const DownTri = styled.span`
  width: 0;
  height: 0;
  border-style: solid;
  border-width: 16px 7px 0 7px;
  border-color: #111 transparent transparent transparent;
`

const PreviewBox = styled.div`
  position: relative;
  flex: none;
  width: 485px;
  height: 111px;
  border: 2px solid #444;
  border-radius: 12px;
  overflow: hidden;
  background: #8c8c8c;
`

const PreviewCol = styled.div`
  flex: none;
  width: 485px;
  display: flex;
  flex-direction: column;
  align-items: center;
`

const DoubleGrip = styled.span`
  flex: none;
  width: 28px;
  height: 8px;
  margin-top: 8px;
  border-top: 2px solid #e4e4e4;
  border-bottom: 2px solid #e4e4e4;
`

const ColorSwatch = styled.div`
  flex: none;
  width: 272px;
  height: 39px;
  border: 2px solid #3c3c3c;
  border-radius: 10px;
  background: #e8e8e8;
`

const RampLabel = styled.span`
  margin-left: 14px;
  margin-top: 2px;
`

const RampWrap = styled.div`
  flex: 1;
  display: flex;
  align-items: center;
  height: 39px;
  margin-left: 23px;
`

const HatchSvg = styled.svg`
  position: absolute;
  z-index: 2;
  ${({ $x, $y }) => css`
    ${$x === 'l' ? 'left: 0;' : 'right: 0;'}
    ${$y === 't' ? 'top: 0;' : 'bottom: 0;'}
  `}
`

const Hatch = ({ x, y }) => (
  <HatchSvg $x={x} $y={y} width="22" height="24">
    <path d={x === 'r' ? 'M2 0L22 24M8 0L22 16M14 0L22 8' : 'M0 2L20 24M0 9L14 24M0 16L8 24'} stroke="#9c9c9c" strokeWidth="1.500" fill="none" />
    <path d={x === 'r' ? 'M5 0L22 20M11 0L22 12' : 'M0 5L17 24M0 12L11 24'} stroke="#3c3c3c" strokeWidth="1.500" fill="none" />
  </HatchSvg>
)

const Layers = styled.div`
  ${margin}
  flex: none;
  width: 99px;
  height: 39px;
  border: 2px solid #3c3c3c;
  border-radius: 10px;
  overflow: hidden;
  display: grid;
  grid-template-columns: repeat(5, 1fr);
  grid-template-rows: 1fr 1fr;
  gap: 2px;
  background: #474747;
  position: relative;
`

const LayerCell = styled.span`
  background: #8a8a8a;
`

const LayerDot = styled.span`
  position: absolute;
  left: 3px;
  top: 3px;
  width: 8px;
  height: 11px;
  border-radius: 50%;
  background: #f0a040;
  border: 1px solid #222;
`

const LayerBank = ({ ml, active }) => (
  <Layers $ml={ml}>
    {Array.from({ length: 10 }, (_, i) => <LayerCell key={i} />)}
    {active && <LayerDot />}
  </Layers>
)

const checker = () => {
  // perspective checker room of the material preview, columns then rows
  const cols = [-60, 60, 252, 375, 460, 520, 568, 605, 635, 660, 685, 715, 752, 800, 862, 948, 1072, 1258, 1400]
  const cx = 660
  const cy = 680
  const out = []
  const yAt = (x, k) => cy + k * (Math.abs(x - cx) + 16) / 616
  for (let i = 0; i < cols.length - 1; i++) {
    const a = cols[i]
    const b = cols[i + 1]
    for (let j = -6; j < 6; j++) {
      const k1 = j * 120
      const k2 = (j + 1) * 120
      const dark = (i + j) % 2 === 0
      out.push(
        <polygon
          key={`${i}-${j}`}
          points={`${a},${yAt(a, k1)} ${b},${yAt(b, k1)} ${b},${yAt(b, k2)} ${a},${yAt(a, k2)}`}
          fill={dark ? '#8e8e8e' : '#2e2e2e'}
        />
      )
    }
  }
  return out
}

const PreviewArt = () => (
  <Svg width="481" height="107" viewBox="60 530 1198 306" preserveAspectRatio="none">
    <defs>
      <radialGradient id="glow">
        <stop offset="0" stopColor="#fff" stopOpacity=".85" />
        <stop offset="1" stopColor="#fff" stopOpacity="0" />
      </radialGradient>
      <radialGradient id="floor">
        <stop offset="0" stopColor="#000" stopOpacity=".9" />
        <stop offset="1" stopColor="#000" stopOpacity="0" />
      </radialGradient>
    </defs>
    {checker()}
    <ellipse cx="632" cy="628" rx="50" ry="45" fill="url(#glow)" />
    <ellipse cx="660" cy="810" rx="200" ry="40" fill="url(#floor)" />
  </Svg>
)

const OutRowItem = ({ alt, pad, gap, expanded, icon, halo, name, nameW, active, extras, restrict }) => (
  <OutRow $alt={alt}>
    <Tree $pad={pad}>
      <Expander $gap={gap} $plus={!expanded} />
      <Halo $c={halo}><Icon name={icon} size={32} /></Halo>
      <TreeName $w={nameW} $active={active}>{name}</TreeName>
      {extras}
    </Tree>
    <RestrictCell>{restrict && <Icon name="eye" size={28} />}</RestrictCell>
    <RestrictCell>{restrict && <Icon name="cursor" size={28} />}</RestrictCell>
    <RestrictCell $last>{restrict && <Icon name="render" size={30} />}</RestrictCell>
  </OutRow>
)

const propTabs = ['renderDim', 'layers', 'sceneDim', 'worldDim', 'cube', 'link', 'wrench', 'meshData', 'material', 'texture', 'stars', 'physics']
const scrubNums = [-40, -20, 0, 20, 40, 60, 80, 100, 120, 140, 160, 180, 200, 220, 240, 260, 280]

const Car = () => (
  <g transform="translate(640 500) scale(0.574 0.3333)">
    <defs>
      <linearGradient id="glint" x1="0" y1="0" x2="0" y2="1">
        <stop offset="0" stopColor="#fff" stopOpacity="0" />
        <stop offset=".35" stopColor="#fff" stopOpacity=".95" />
        <stop offset="1" stopColor="#fff" stopOpacity="0" />
      </linearGradient>
      <linearGradient id="nose" x1="0" y1="0" x2="1" y2="0">
        <stop offset="0" stopColor="#66666c" />
        <stop offset="1" stopColor="#66666c" stopOpacity="0" />
      </linearGradient>
      <linearGradient id="tail" x1="0" y1="0" x2="1" y2="0">
        <stop offset="0" stopColor="#55555f" stopOpacity="0" />
        <stop offset="1" stopColor="#55555f" />
      </linearGradient>
      <linearGradient id="lip" x1="0" y1="0" x2="1" y2="0">
        <stop offset="0" stopColor="#77777c" stopOpacity="0" />
        <stop offset="1" stopColor="#4a4a4e" />
      </linearGradient>
      <linearGradient id="screen" x1="0" y1="1" x2="1" y2="0">
        <stop offset="0" stopColor="#b8b8c4" stopOpacity="0" />
        <stop offset="1" stopColor="#b8b8c4" />
      </linearGradient>
    </defs>
    {[
      [40, 57, '#b2b2b2'], [57, 99, '#ababab'], [99, 167, '#cacaca'], [167, 258, '#b5b5b8'],
      [258, 369, '#a2a2a6'], [369, 497, '#9b9ba0'], [497, 630, '#96969b'], [630, 919, '#8f8f96'],
      [919, 1056, '#8c8c93'], [1056, 1183, '#85858e'], [1183, 1290, '#7f7f89'], [1290, 1383, '#7a7a85'],
      [1383, 1450, '#757580'], [1450, 1493, '#5f5f6e'], [1493, 1508, '#7a7a90'],
    ].map(([a, b, c]) => <rect key={a} x={a} y="124" width={b - a} height="732" fill={c} />)}
    <path d="M55 118H1500V128L1380 132 1330 130H630L630 136 180 130H55z" fill="#6c6c7a" />
    <path d="M65 825L140 590 485 350 680 260 830 235 985 240 1125 280 1290 305 1445 345 1445 620 1370 730 1120 790 1015 802 760 815 480 825 270 840 110 835z" fill="#919296" />
    <path d="M490 440L1115 335 1125 300 985 265 830 258 680 275 490 370z" fill="#8f8f95" />
    <path d="M1330 345L1445 345 1445 620 1370 730 1360 500z" fill="url(#tail)" />
    <path d="M65 825L140 590 175 590 135 800z" fill="url(#nose)" />
    <path d="M110 835L280 800 270 840z" fill="url(#lip)" />
    <path d="M140 590L485 345 488 372 370 440 180 575z" fill="#6e6e76" opacity=".75" />
    <path d="M380 430L485 370 485 440z" fill="url(#screen)" />
    <path d="M485 345L680 255 830 232 985 236 1125 278 1125 300 985 265 830 258 680 275 488 370z" fill="#6c6c78" />
    <path d="M1125 278L1210 300 1290 305 1330 315 1200 318 1130 300z" fill="#a6a6ae" />
    <path d="M1300 312L1445 340 1445 350 1320 322z" fill="#3c3c42" />
    <path d="M1125 280L1140 330 1125 440 1112 330z" fill="url(#glint)" />
    <path d="M488 370L678 275" stroke="#0a0a0a" strokeWidth="3" vectorEffect="non-scaling-stroke" />
    <path d="M1365 735L1410 670 1380 735z" fill="#a8b0d4" />
    <path d="M275 825L490 810 490 815 285 830z" fill="#a2aad0" />
    <ellipse cx="378" cy="690" rx="112" ry="190" fill="#a3a3a8" />
    <ellipse cx="1252" cy="640" rx="132" ry="240" fill="#8a8a90" />
    <ellipse cx="378" cy="700" rx="100" ry="172" fill="#737376" stroke="#555" strokeWidth="1" vectorEffect="non-scaling-stroke" />
    <ellipse cx="1252" cy="663" rx="121" ry="210" fill="#737376" stroke="#555" strokeWidth="1" vectorEffect="non-scaling-stroke" />
    <rect x="1217" y="570" width="6" height="8" fill="#111" />
    <path d="M40 855V122H57V118H533V112H1075V118H1400V120H1508V855H1395V860H1210V862H380V860H130V856z" fill="none" stroke="#f2a03c" strokeWidth="2.500" vectorEffect="non-scaling-stroke" />
  </g>
)

const Lamp = ({ x, y, to }) => (
  <g>
    <line x1={x} y1={y + 26} x2={x} y2={to} stroke="#2a2a2a" strokeWidth="1.500" />
    <circle cx={x} cy={y} r="6" fill="#050505" />
    <circle cx={x} cy={y} r="15" fill="none" stroke="#111" strokeWidth="1.500" strokeDasharray="5 4" />
    <circle cx={x} cy={y} r="24" fill="none" stroke="#111" strokeWidth="1.500" strokeDasharray="6 5" />
  </g>
)

const Scene3D = () => (
  <Canvas width="1480" height="1377" viewBox="316 98 1480 1377">
    <rect x="316" y="767" width="1480" height="10" fill="#2a5e22" />
    <rect x="316" y="777" width="1480" height="20" fill="#6a6a78" />
    <rect x="316" y="797" width="1480" height="11" fill="#2a5e22" />
    <path d="M330 769.500H1796M330 772.500H1796M344 799.500H1796M344 802.500H1796M344 805.500H1796" stroke="#4a5a48" strokeWidth="1" />
    <rect x="316" y="808" width="1480" height="2" fill="#555" />
    <Lamp x={534} y={458} to={783} />
    <Lamp x={995} y={443} to={540} />
    <Car />
    <Lamp x={1070} y={337} to={802} />
    <ellipse cx="1085" cy="663" rx="6" ry="6.500" fill="#e8a552" stroke="#111" strokeWidth="1.500" />
    <path d="M1604 261L1590 292H1638z" fill="#050505" />
    <path d="M1581 293L1651 295 1685 270 1631 285M1581 293L1597 340H1665L1685 270M1651 295L1597 340M1651 295L1665 340" fill="none" stroke="#080808" strokeWidth="1.500" />
    <path d="M1581 293H1651M1597 340H1665" stroke="#080808" strokeWidth="2" />
    <circle cx="1767" cy="1459" r="20" fill="none" stroke="#fff" strokeWidth="2" />
    <circle cx="1767" cy="1459" r="20" fill="none" stroke="#e01a1a" strokeWidth="2" strokeDasharray="9 9" />
    <path d="M1767 1420V1450M1767 1468V1490M1728 1459H1758M1776 1459H1795" stroke="#0a0a0a" strokeWidth="2" />
    <path d="M316 1424H366" stroke="#09b80e" strokeWidth="4" />
    <path d="M366 1424V1364" stroke="#1414c8" strokeWidth="4" />
    <text x="318" y="1421" fontFamily="DejaVu Sans" fontSize="22" fill="#09b80e">y</text>
    <text x="368" y="1421" fontFamily="DejaVu Sans" fontSize="22" fill="#d01818">x</text>
    <text x="368" y="1376" fontFamily="DejaVu Sans" fontSize="22" fill="#1414c8">z</text>
  </Canvas>
)

const LockColumn = () => (
  <Group $col $rows={3} $ml={18} $w={71}>
    {[0, 1, 2].map(i => <Cell key={i} $kind="hdr" $center $sep="col"><Icon name="lockOpen" size={32} /></Cell>)}
  </Group>
)

const App = () => (
  <Page>
    <Global />
    <TitleBar>
      <Light $ml={12} $c="#fc5b57"><LightDot /></Light>
      <Light $ml={16} $c="#fdbc40" />
      <Light $ml={16} $c="#33c748" />
      <Title>
        <Svg width="24" height="32" viewBox="0 0 24 32">
          <path d="M1 1h15l7 7v23H1z" fill="#f4f4f4" stroke="#bbb" />
          <circle cx="12" cy="19" r="6" fill="#f1a46a" />
          <circle cx="12" cy="19" r="3" fill="#6c97d6" />
        </Svg>
        p4.blend
      </Title>
    </TitleBar>

    <Bar $h={53} $pt={3}>
      <Hatch x="l" y="b" />
      <Hatch x="r" y="t" />
      <Group $w={58}><Cell $kind="dark" $pad={9} $gap={3}><Icon name="info" /><Spin /></Cell></Group>
      <Menu $w={102} $pl={25}>File</Menu>
      <Menu $w={115}>Render</Menu>
      <Menu $w={123}>Window</Menu>
      <Menu $w={74}>Help</Menu>
      <Group $w={383}>
        <Cell $kind="dark" $w={64} $pad={10} $gap={5}><Icon name="screen" /><Spin /></Cell>
        <Cell $kind="num" $pad={11}>Default</Cell>
        <Cell $kind="hdr" $w={40} $center><Icon name="plus" size={30} /></Cell>
        <Cell $kind="hdr" $w={40} $center><Icon name="cross" size={30} /></Cell>
      </Group>
      <Group $w={382} $ml={12}>
        <Cell $kind="dark" $w={63} $pad={10} $gap={5}><Icon name="scene" /><Spin /></Cell>
        <Cell $kind="num" $pad={11}>Scene</Cell>
        <Cell $kind="hdr" $w={40} $center><Icon name="plus" size={30} /></Cell>
        <Cell $kind="hdr" $w={40} $center><Icon name="cross" size={30} /></Cell>
      </Group>
      <Group $w={232} $ml={34}><Cell $kind="dark" $pad={13}>Blender Render<Grow /><Spin /></Cell></Group>
      <Halo $ml={34}><Icon name="logo" size={32} /></Halo>
      <Stats>v2.78 | Verts:946 | Faces:715 | Tris:1,726 | Objects:1/15 | Lamps:0/4 | Mem:17.26M | Avatar</Stats>
    </Bar>
    <Black />

    <Body>
      <LeftCol>
        <ViewRow>
          <ToolColumn>
            <ToolTop>
              <Tabs>
                <Tab $on $h={86}><TabText>Tools</TabText></Tab>
                <Tab $h={103}><TabText>Create</TabText></Tab>
                <Tab $h={135}><TabText>Relations</TabText></Tab>
                <Tab $h={147}><TabText>Animation</TabText></Tab>
                <Tab $h={114}><TabText>Physics</TabText></Tab>
                <Tab $h={183}><TabText>Grease Pencil</TabText></Tab>
              </Tabs>
              <Shelf>
                <Scroll $right={9} $top={8} $bottom={8}><ScrollThumb $at={64} $h={900} /></Scroll>
                <Group $col $rows={3} $mt={-4}>
                  <Cell $pad={13} $sep="col">Translate</Cell>
                  <Cell $pad={13} $sep="col">Rotate</Cell>
                  <Cell $pad={13} $sep="col">Scale</Cell>
                </Group>
                <Group $mt={12}><Cell $pad={13}>Mirror</Cell></Group>
                <Rule $mt={16} $l={-12} $r={-16} />
                <PanelHead title="Edit" open lift={4} />
                <Group $col $rows={3} $mt={15}>
                  <Cell $pad={13} $sep="col">Duplicate</Cell>
                  <Cell $pad={13} $sep="col">Duplicate Linked</Cell>
                  <Cell $pad={13} $sep="col">Delete</Cell>
                </Group>
                <Group $mt={12}><Cell $pad={13}>Join</Cell></Group>
                <Group $mt={10}><Cell $kind="dark" $pad={13}>Set Origin<Grow /><Spin /></Cell></Group>
                <Label $mt={20}>Shading:</Label>
                <Group $mt={7}>
                  <Cell $pad={13}>Smooth</Cell>
                  <Cell $pad={13}>Flat</Cell>
                </Group>
                <Label $mt={20}>Data Transfer:</Label>
                <Group $mt={7}>
                  <Cell $pad={13}>Data</Cell>
                  <Cell $pad={13}>Data La</Cell>
                </Group>
                <Rule $mt={16} $l={-12} $r={-16} />
                <PanelHead title="History" open lift={4} />
                <Group $col $rows={2} $mt={14}>
                  <SplitRow $sep="col">
                    <Cell $pad={13}>Undo</Cell>
                    <Cell $pad={13}>Redo</Cell>
                  </SplitRow>
                  <Cell $pad={13} $sep="col">Undo History</Cell>
                </Group>
                <Label $mt={21}>Repeat:</Label>
                <Group $col $rows={2} $mt={7}>
                  <Cell $pad={13} $sep="col">Repeat Last</Cell>
                  <Cell $pad={13} $sep="col">History...</Cell>
                </Group>
              </Shelf>
            </ToolTop>
            <NewMaterial>
              <PanelHead title="New Material" open pad={15} textGap={12} grip={21} />
            </NewMaterial>
          </ToolColumn>

          <Viewport>
            <Scene3D />
            <ViewLabel $x={40} $y={19}>User Ortho</ViewLabel>
            <ViewLabel $x={89} $y={1337}>(1) Avatar</ViewLabel>
          </Viewport>

          <NPanel>
            <Hatch x="r" y="t" />
            <Scroll $right={10} $top={8} $bottom={10}><ScrollThumb $h={652} /></Scroll>
            <PanelHead title="Transform" open />
            <Label $mt={25}>Location:</Label>
            <HRow $mt={6}>
              <Vec w={290} rows={[['X:', '0.00000'], ['Y:', '0.00000'], ['Z:', '1.34000']]} />
              <LockColumn />
            </HRow>
            <Label $mt={15}>Rotation:</Label>
            <HRow $mt={7}>
              <Vec w={290} rows={[['X:', '0°'], ['Y:', '0°'], ['Z:', '0°']]} />
              <LockColumn />
            </HRow>
            <Group $mt={5}><Cell $kind="dark" $pad={13}>XYZ Euler<Grow /><Spin /></Cell></Group>
            <Label $mt={15}>Scale:</Label>
            <HRow $mt={6}>
              <Vec w={290} rows={[['X:', '1.000'], ['Y:', '4.500'], ['Z:', '1.300']]} />
              <LockColumn />
            </HRow>
            <Label $mt={14}>Dimensions:</Label>
            <Vec mt={7} w={379} rows={[['X:', '2.000'], ['Y:', '9.000'], ['Z:', '2.600']]} />
            <Rule $mt={16} $l={-12} $r={-12} />
            <PanelHead title="Grease Pencil Layers" open check checkOn checkGap={15} textGap={8} lift={2} />
            <Group $mt={15}>
              <Cell $kind="blue" $center>Scene</Cell>
              <Cell $kind="dark" $center>Object</Cell>
            </Group>
            <Group $mt={11}>
              <Cell $kind="dark" $w={62} $pad={7} $gap={3}><Icon name="pencil" /><Spin /></Cell>
              <Cell $pad={8}><Icon name="plus" size={26} /><Grow />New<Grow /></Cell>
            </Group>
            <Group $mt={11}><Cell $center>New Layer</Cell></Group>
            <Rule $mt={15} $l={-12} $r={-12} />
            <PanelHead title="View" open />
            <Group $mt={15} $r={20}><Num label="Lens:" value="35.000" /></Group>
            <Label $mt={14}>Lock to Object:</Label>
            <Group $mt={10}>
              <Cell $kind="num" $pad={7}><Icon name="cubeOrange" size={26} /><Grow /><Icon name="dropper" size={26} /></Cell>
            </Group>
            <CheckRow $mt={12}><CheckBox /><CheckText>Lock to Cursor</CheckText></CheckRow>
            <CheckRow $mt={22}><CheckBox /><CheckText>Lock Camera to View</CheckText></CheckRow>
            <Label $mt={24}>Clip:</Label>
            <Vec mt={8} w={379} rows={[['Start:', '0.100'], ['End:', '1000.000']]} />
          </NPanel>
        </ViewRow>

        <Bar $h={50} $pt={4}>
          <Hatch x="l" y="b" />
          <Group $w={59}><Cell $kind="dark" $pad={9} $gap={3}><Icon name="view3d" /><Spin /></Cell></Group>
          <Menu $w={117} $pl={26}>View</Menu>
          <Menu $w={105}>Select</Menu>
          <Menu $w={81}>Add</Menu>
          <Menu $w={96}>Object</Menu>
          <Group $w={231}>
            <Cell $kind="dark" $pad={10} $gap={7}><Icon name="cubeOrange" size={28} />Object Mode<Grow /><Spin /></Cell>
          </Group>
          <Group $w={70} $ml={11}><Cell $kind="dark" $pad={9} $gap={7}><Icon name="sphereBig" size={28} /><Spin /></Cell></Group>
          <Group $w={109} $ml={10}>
            <Cell $kind="dark" $w={70} $pad={6} $gap={6}><Icon name="pivot" /><Spin /></Cell>
            <Cell $kind="num" $center><Icon name="orient" /></Cell>
          </Group>
          <Group $w={188} $ml={11}>
            <Cell $kind="num" $w={40} $center><Icon name="manip" /></Cell>
            <Cell $kind="dark" $pad={14}>Global<Grow /><Spin /></Cell>
          </Group>
          <LayerBank ml={10} active />
          <LayerBank ml={11} />
          <Group $w={38} $ml={12}><Cell $center><Icon name="linkCam" /></Cell></Group>
          <Group $w={38} $ml={12}><Cell $center><Icon name="ring" /></Cell></Group>
          <Group $w={149} $ml={11}>
            <Cell $w={39} $center><Icon name="magnet" /></Cell>
            <Cell $kind="dark" $w={71} $pad={5} $gap={9}><Icon name="snapEl" size={28} /><Spin /></Cell>
            <Cell $center><Icon name="snapTg" /></Cell>
          </Group>
          <Group $w={78} $ml={12}>
            <Cell $center><Icon name="renderStill" /></Cell>
            <Cell $center><Icon name="clapper" /></Cell>
          </Group>
        </Bar>
        <Black />

        <Timeline>
          <Hatch x="r" y="t" />
          <TimeBand $dark $w={380} $pos={114} />
          <Cfra />
          <TimeBand $w={1637} $pos={123} />
          <TimeBand $dark $w={219} $pos={67} />
        </Timeline>
        <Scrub>
          <ScrubThumb />
          {scrubNums.map(n => <ScrubNum key={n}>{n}</ScrubNum>)}
        </Scrub>
        <ThinRule />
        <Bar $h={52} $pt={7} $bg="#737373">
          <Group $w={59}><Cell $kind="dark" $pad={9} $gap={3}><Icon name="clock" /><Spin /></Cell></Group>
          <Menu $w={117} $pl={26}>View</Menu>
          <Menu $w={113}>Marker</Menu>
          <Menu $w={107}>Frame</Menu>
          <Menu $w={121}>Playback</Menu>
          <Group $w={79}>
            <Cell $center><Icon name="clockRange" /></Cell>
            <Cell $center><Icon name="lock" /></Cell>
          </Group>
          <Group $w={461} $ml={13} $r={20}>
            <Num label="Start:" value="1" />
            <Num label="End:" value="250" />
          </Group>
          <Group $w={178} $ml={12} $r={20}><Num value="1" /></Group>
          <Group $w={238} $ml={34}>
            {['first', 'prev', 'rev', 'play', 'next', 'last'].map(n => <Cell key={n} $center><Icon name={n} size={28} /></Cell>)}
          </Group>
          <Group $w={240} $ml={11}><Cell $kind="dark" $pad={14}>No Sync<Grow /><Spin /></Cell></Group>
          <Group $w={40} $ml={32}><Cell $center><Icon name="record" /></Cell></Group>
          <Group $w={70} $ml={10}><Cell $kind="dark" $pad={9} $gap={9}><Icon name="key" size={30} /><Spin /></Cell></Group>
          <Group $w={300} $ml={11}><Cell $kind="num" $pad={6}><Icon name="keyset" /></Cell></Group>
        </Bar>
      </LeftCol>

      <RightCol>
        <Outliner>
          <Hatch x="l" y="b" />
          <Hatch x="r" y="t" />
          <Bar $h={51} $pad={17} $pt={2} $bg="#737373">
            <Group $w={59}><Cell $kind="dark" $pad={6} $gap={5}><Icon name="outliner" /><Spin /></Cell></Group>
            <Menu $w={117} $pl={26}>View</Menu>
            <Menu $w={99}>Search</Menu>
            <Group $w={252}><Cell $kind="dark" $pad={13}>All Scenes<Grow /><Spin /></Cell></Group>
            <Group $w={90} $ml={11}><Cell $kind="num" $pad={6}><Icon name="search" /></Cell></Group>
          </Bar>
          <OutRows>
            <TreeLine />
            <OutRowItem pad={7} gap={19} expanded icon="scene" halo="#9a9a9a" name="Scene" nameW={110} />
            <OutRowItem alt pad={57} gap={9} icon="layers" name="RenderLayers" nameW={167} extras={<><RowBar /><Halo $c="#9a9a9a" $ml={16}><Icon name="layers" size={30} /></Halo></>} />
            <OutRowItem pad={57} gap={9} icon="world" halo="#9a9ab4" name="World" nameW={81} extras={<><RowBar /><Halo $ml={19}><Icon name="texture" /></Halo><Halo $ml={6}><Icon name="texture" /></Halo><Halo $c="#9a9a9a" $ml={7}><Icon name="texture" /></Halo></>} />
            <OutRowItem alt pad={48} gap={18} icon="meshOrange" halo="#b08a58" name="Avatar" nameW={91} active restrict extras={<><RowBar /><Halo $ml={18}><Icon name="meshData" /></Halo></>} />
            <OutRowItem pad={48} gap={18} icon="cameraObj" name="Camera" nameW={105} restrict extras={<><RowBar /><Halo $ml={16}><Icon name="cameraData" /></Halo></>} />
            <OutRowItem alt pad={48} gap={18} icon="meshOrange" name="Carretera" nameW={123} restrict extras={<><RowBar /><Halo $ml={17}><Icon name="meshData" /></Halo></>} />
            <OutRowItem pad={48} gap={18} icon="meshOrange" name="Carrocería" nameW={132} restrict extras={<><RowBar /><Halo $ml={17}><Icon name="meshData" /></Halo><Halo $ml={6}><Icon name="wrench" /></Halo></>} />
            <Scroll $right={5} $top={8} $bottom={6}><ScrollThumb $h={100} /></Scroll>
          </OutRows>
        </Outliner>
        <Black />
        <Props>
          <Hatch x="l" y="b" />
          <Hatch x="r" y="t" />
          <Bar $h={51} $pad={17} $bg="#737373">
            <Group $w={59}><Cell $kind="dark" $pad={7} $gap={5}><Icon name="props" /><Spin /></Cell></Group>
            <Group $w={479} $ml={17}>
              {propTabs.map(n => <Cell key={n} $kind={n === 'material' ? 'blue' : 'dark'} $center><Icon name={n} size={32} /></Cell>)}
            </Group>
          </Bar>
          <PropsBody>
            <Scroll $right={5} $top={59} $bottom={6}><ScrollThumb $h={708} /></Scroll>
            <HRow>
              <ListBox>
                <ListRowSel>MatAvatar</ListRowSel>
                <ListPlus />
                <ListGrip />
              </ListBox>
              <ListSide>
                <SideBtn><Minus /></SideBtn>
                <SideBtn $dark><DownTri /></SideBtn>
              </ListSide>
            </HRow>
            <HRow $mt={15}>
              <Group $w={353}>
                <Cell $kind="dark" $w={62} $pad={8} $gap={3}><Icon name="material" /><Spin /></Cell>
                <Cell $kind="num" $pad={13}>MatAvatar</Cell>
                <Cell $kind="hdr" $w={41} $center>F</Cell>
                <Cell $kind="hdr" $w={40} $center><Icon name="plus" size={30} /></Cell>
                <Cell $kind="hdr" $w={40} $center><Icon name="cross" size={30} /></Cell>
              </Group>
              <Group $w={40} $ml={17}><Cell $kind="hdr" $center><Icon name="nodes" /></Cell></Group>
              <Group $w={134} $ml={17}><Cell $kind="dark" $pad={14}>Data<Grow /><Spin /></Cell></Group>
            </HRow>
            <Group $mt={11} $w={561}>
              <Cell $kind="blue" $center>Surface</Cell>
              <Cell $kind="dark" $center>Wire</Cell>
              <Cell $kind="dark" $center>Volume</Cell>
              <Cell $kind="dark" $center>Halo</Cell>
            </Group>
            <Rule $mt={13} $l={-12} $r={-12} />
            <PanelHead title="Preview" open textGap={12} grip={5} />
            <HRow $mt={15}>
              <PreviewCol>
                <PreviewBox><PreviewArt /></PreviewBox>
                <DoubleGrip />
              </PreviewCol>
              <Group $col $rows={6} $w={58} $ml={18}>
                <Cell $kind="dark" $center $sep="col"><Icon name="plane" /></Cell>
                <Cell $kind="blue" $center $sep="col"><Icon name="sphereBig" /></Cell>
                <Cell $kind="dark" $center $sep="col"><Icon name="cubeGray" /></Cell>
                <Cell $kind="dark" $center $sep="col"><Icon name="monkey" /></Cell>
                <Cell $kind="dark" $center $sep="col"><Icon name="hair" /></Cell>
                <Cell $kind="dark" $center $sep="col"><Icon name="sky" /></Cell>
              </Group>
            </HRow>
            <Rule $mt={16} $l={-12} $r={-12} />
            <PanelHead title="Diffuse" open textGap={12} grip={5} />
            <HRow $mt={19}>
              <ColorSwatch />
              <Group $ml={16} $w={273}><Cell $kind="dark" $pad={14}>Lambert<Grow /><Spin /></Cell></Group>
            </HRow>
            <HRow $mt={5} $w={561}>
              <Slider label="Intensity:" value="0.800" frac={0.8} w={272} />
              <RampWrap><CheckBox mt={-6} /><RampLabel>Ramp</RampLabel></RampWrap>
            </HRow>
            <Rule $mt={24} $l={-12} $r={-12} />
            <PanelHead title="Specular" textGap={12} grip={5} h={41} />
            <Rule $l={-12} $r={-12} />
            <PanelHead title="Shading" textGap={12} grip={5} h={41} />
            <Rule $l={-12} $r={-12} />
            <PanelHead title="Transparency" open check checkOn checkGap={16} textGap={7} grip={5} h={41} />
            <Group $mt={15} $w={561}>
              <Cell $kind="dark" $center>Mask</Cell>
              <Cell $kind="blue" $center>Z Transparency</Cell>
              <Cell $kind="dark" $center>Raytrace</Cell>
            </Group>
            <HRow $mt={13}>
              <Slider label="Alpha:" value="0.000" frac={0.07} w={272} />
              <Sl $w={273} $ml={16}><Cell $kind="num" $pad={9}><Tri $dir="l" /><NumText><span>Fresnel:</span><span>0.000</span></NumText><Tri $dir="r" /></Cell></Sl>
            </HRow>
            <HRow $mt={5}>
              <Slider label="Specular:" value="1.000" frac={1} w={272} />
              <Slider label="Blend:" value="1.250" frac={0.28} off w={273} ml={16} />
            </HRow>
            <Rule $mt={18} $l={-12} $r={-12} />
            <PanelHead title="Mirror" check checkGap={16} textGap={7} grip={5} h={41} />
            <Rule $l={-12} $r={-12} />
            <PanelHead title="Subsurface Scattering" check checkGap={16} textGap={7} grip={5} h={41} />
            <Rule $l={-12} $r={-12} />
            <PanelHead title="Strand" textGap={12} grip={5} h={41} />
            <Rule $l={-12} $r={-12} />
            <PanelHead title="Options" open textGap={12} grip={5} h={41} />
          </PropsBody>
        </Props>
      </RightCol>
    </Body>
  </Page>
)

export default App
